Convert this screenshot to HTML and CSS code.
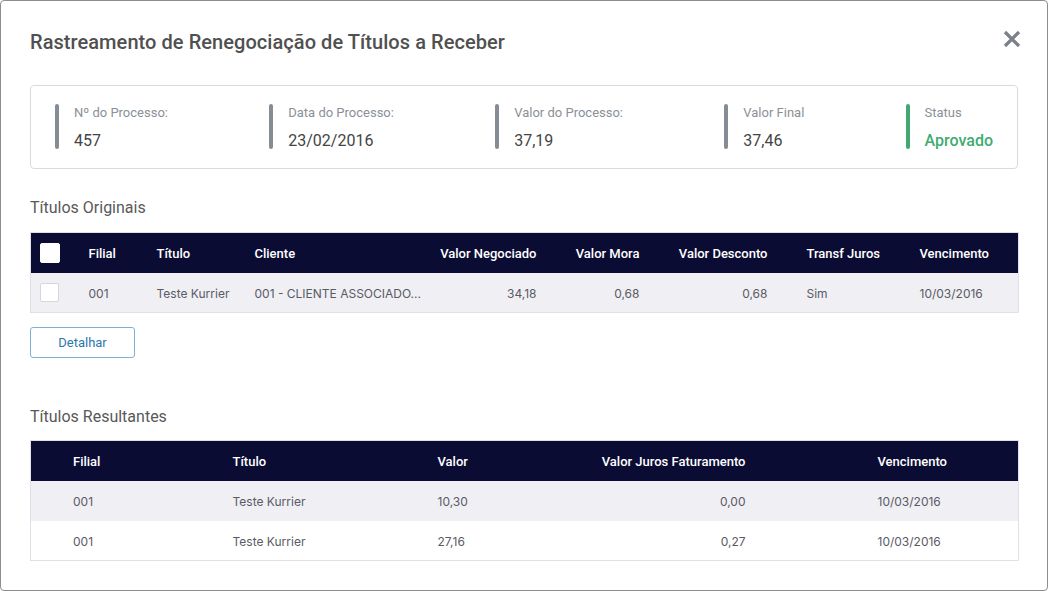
FILE: index.html
```html
<!DOCTYPE html>
<html lang="pt-BR">
<head>
<meta charset="utf-8">
<title>Rastreamento de Renegociação de Títulos a Receber</title>
<link rel="stylesheet" href="styles.css">
</head>
<body>
<div class="modal">
  <div class="modal-header">
    <h1 class="modal-title">Rastreamento de Renegociação de Títulos a Receber</h1>
    <button class="close-btn" aria-label="Fechar">
      <svg width="18" height="18" viewBox="0 0 18 18"><path d="M2 2 L16 16 M16 2 L2 16" stroke="#7c8188" stroke-width="3.2" stroke-linecap="butt" fill="none"/></svg>
    </button>
  </div>

  <div class="info-box">
    <div class="info-item"><div class="info-label">Nº do Processo:</div><div class="info-value">457</div></div>
    <div class="info-item"><div class="info-label">Data do Processo:</div><div class="info-value">23/02/2016</div></div>
    <div class="info-item"><div class="info-label">Valor do Processo:</div><div class="info-value">37,19</div></div>
    <div class="info-item"><div class="info-label">Valor Final</div><div class="info-value">37,46</div></div>
    <div class="info-item success"><div class="info-label">Status</div><div class="info-value">Aprovado</div></div>
  </div>

  <h2 class="section-title first">Títulos Originais</h2>
  <table class="grid">
    <colgroup>
      <col style="width:46px"><col style="width:68px"><col style="width:98px"><col style="width:185px"><col style="width:121px"><col style="width:103px"><col style="width:128px"><col style="width:128px"><col style="width:111px">
    </colgroup>
    <thead>
      <tr>
        <th class="chk-cell"><span class="chk head"></span></th>
        <th>Filial</th>
        <th>Título</th>
        <th>Cliente</th>
        <th class="num">Valor Negociado</th>
        <th class="num">Valor Mora</th>
        <th class="num">Valor Desconto</th>
        <th class="wide-left">Transf Juros</th>
        <th>Vencimento</th>
      </tr>
    </thead>
    <tbody>
      <tr class="alt">
        <td class="chk-cell"><span class="chk"></span></td>
        <td>001</td>
        <td>Teste Kurrier</td>
        <td>001 - CLIENTE ASSOCIADO...</td>
        <td class="num">34,18</td>
        <td class="num">0,68</td>
        <td class="num">0,68</td>
        <td class="wide-left">Sim</td>
        <td>10/03/2016</td>
      </tr>
    </tbody>
  </table>

  <button class="btn-outline">Detalhar</button>

  <h2 class="section-title second">Títulos Resultantes</h2>
  <table class="grid second-grid">
    <colgroup>
      <col style="width:190px"><col style="width:205px"><col style="width:135px"><col style="width:197px"><col style="width:261px">
    </colgroup>
    <thead>
      <tr>
        <th class="first-col">Filial</th>
        <th>Título</th>
        <th>Valor</th>
        <th class="num">Valor Juros Faturamento</th>
        <th class="venc">Vencimento</th>
      </tr>
    </thead>
    <tbody>
      <tr class="alt">
        <td class="first-col">001</td>
        <td>Teste Kurrier</td>
        <td>10,30</td>
        <td class="num">0,00</td>
        <td class="venc">10/03/2016</td>
      </tr>
      <tr>
        <td class="first-col">001</td>
        <td>Teste Kurrier</td>
        <td>27,16</td>
        <td class="num">0,27</td>
        <td class="venc">10/03/2016</td>
      </tr>
    </tbody>
  </table>
</div>
</body>
</html>
```

FILE: styles.css
```css
* { box-sizing: border-box; }
html, body { margin: 0; padding: 0; background: #fff; }
body { font-family: Roboto, "Liberation Sans", sans-serif; }

.modal {
  width: 1048px;
  height: 591px;
  border: 1px solid #8d8d8d;
  border-radius: 4px;
  padding: 29px 29px 0 29px;
  background: #fff;
}

.modal-header {
  display: flex;
  justify-content: space-between;
  align-items: flex-start;
  height: 24px;
}
.modal-title {
  margin: 0;
  font-size: 20px;
  line-height: 24px;
  font-weight: 500;
  letter-spacing: 0.06px;
  color: #505050;
}
.close-btn {
  border: 0;
  background: none;
  padding: 0;
  margin-top: 0;
  margin-right: -3px;
  width: 18px;
  height: 18px;
  display: flex;
}

.info-box {
  margin-top: 31px;
  border: 1px solid #d6dbe1;
  border-radius: 4px;
  padding: 18px 24px 19px 24px;
  display: flex;
  justify-content: space-between;
}
.info-item {
  position: relative;
  height: 45px;
  padding-left: 19px;
}
.info-item::before {
  content: "";
  position: absolute;
  left: 0;
  top: 0;
  width: 4px;
  height: 45px;
  border-radius: 2px;
  background: #868c93;
}
.info-item.success::before { background: #3fa96f; }
.info-label {
  font-size: 13px;
  line-height: 16px;
  padding-top: 1px;
  color: #8a9098;
}
.info-value {
  margin-top: 10px;
  font-size: 16px;
  line-height: 20px;
  color: #444;
}
.info-item.success .info-value {
  color: #3fab70;
  font-weight: 500;
}

.section-title {
  margin: 0;
  font-size: 16px;
  line-height: 20px;
  font-weight: 400;
  color: #595959;
}
.section-title.first { margin-top: 29px; }
.section-title.second { margin-top: 49px; }

.grid {
  margin-top: 14px;
  width: 988px;
  border-collapse: collapse;
  table-layout: fixed;
  border: 1px solid #dde2e9;
}
.grid.second-grid { margin-top: 13px; }
.grid th, .grid td {
  height: 40px;
  padding: 2px 12px 0 12px;
  text-align: left;
  vertical-align: middle;
  white-space: nowrap;
  overflow: hidden;
}
.grid th {
  background: #0b0c33;
  color: #fff;
  font-size: 13px;
  font-weight: 500;
}
.grid td {
  font-family: Inter, Roboto, sans-serif;
  font-size: 12px;
  color: #5a5a66;
}
.grid tr.alt td { background: #efeff4; }
.grid .num { text-align: right; }
.grid .wide-left { padding-left: 27px; }
.grid .chk-cell { padding: 0 0 0 9px; }
.grid .first-col { padding-left: 42px; }
.grid .venc { padding-left: 120px; }

.chk {
  display: block;
  width: 19px;
  height: 19px;
  border-radius: 2px;
  background: #fff;
  border: 1px solid #d4d6dc;
}
.chk.head { border-color: #fff; width: 20px; height: 20px; }

.btn-outline {
  display: block;
  margin-top: 14px;
  width: 105px;
  height: 31px;
  border: 1px solid #7eb1d1;
  border-radius: 3px;
  background: #fff;
  color: #2b78ab;
  font-family: Roboto, sans-serif;
  font-size: 13px;
  padding: 0;
}
```
